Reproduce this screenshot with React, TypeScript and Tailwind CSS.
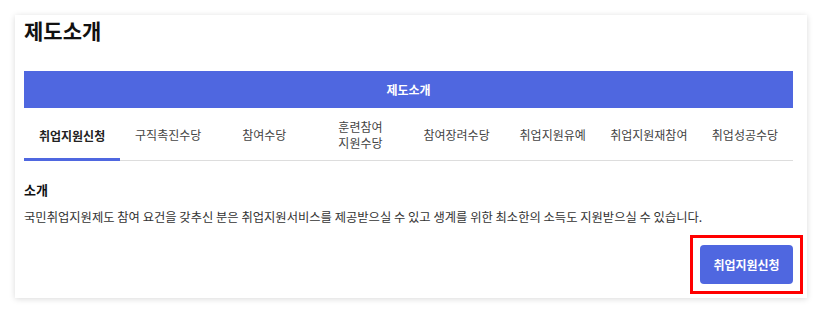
import React from "react";

const tabs: string[][] = [
  ["취업지원신청"],
  ["구직촉진수당"],
  ["참여수당"],
  ["훈련참여", "지원수당"],
  ["참여장려수당"],
  ["취업지원유예"],
  ["취업지원재참여"],
  ["취업성공수당"],
];

export default function App() {
  return (
    <div
      className="w-[823px] h-[314px] bg-white p-[15px]"
      style={{ fontFamily: '"Noto Sans CJK KR", "Noto Sans", sans-serif' }}
    >
      <div className="w-[792px] h-[283px] bg-white shadow-[0_1px_6px_rgba(0,0,0,0.15)] pl-[9px] pr-[14px] flex flex-col">
        <h2 className="text-[21px] leading-[28px] font-bold text-[#111] mt-[1px]">제도소개</h2>
        <div className="mt-[27px] h-[37px] bg-[#4f67e0] flex items-center justify-center text-white text-[12px] font-bold">
          제도소개
        </div>
        <div className="mt-[2px] flex border-b border-[#dddddd] h-[51px]">
          {tabs.map((t, i) => (
            <div
              key={i}
              className={
                "flex-1 flex flex-col items-center justify-center text-[12px] leading-[16px] " +
                (i === 0
                  ? "font-bold text-[#222] border-b-[3px] border-[#4f67e0] mb-[-1px] pt-[3px]"
                  : "text-[#444]")
              }
            >
              {t.map((l, j) => (
                <span key={j}>{l}</span>
              ))}
            </div>
          ))}
        </div>
        <div className="mt-[20px] text-[13px] leading-[18px] font-bold text-[#111]">소개</div>
        <p className="mt-[9px] text-[12.3px] leading-[18px] text-[#333] whitespace-nowrap">
          국민취업지원제도 참여 요건을 갖추신 분은 취업지원서비스를 제공받으실 수 있고 생계를 위한 최소한의 소득도 지원받으실 수 있습니다.
        </p>
        <div className="flex justify-end mt-[9px] mr-[-10px]">
          <div className="border-[3px] border-[#ff0000] p-[7px]">
            <button className="w-[93px] h-[39px] bg-[#4f67e0] rounded-[4px] text-white text-[12px] font-bold">
              취업지원신청
            </button>
          </div>
        </div>
      </div>
    </div>
  );
}
